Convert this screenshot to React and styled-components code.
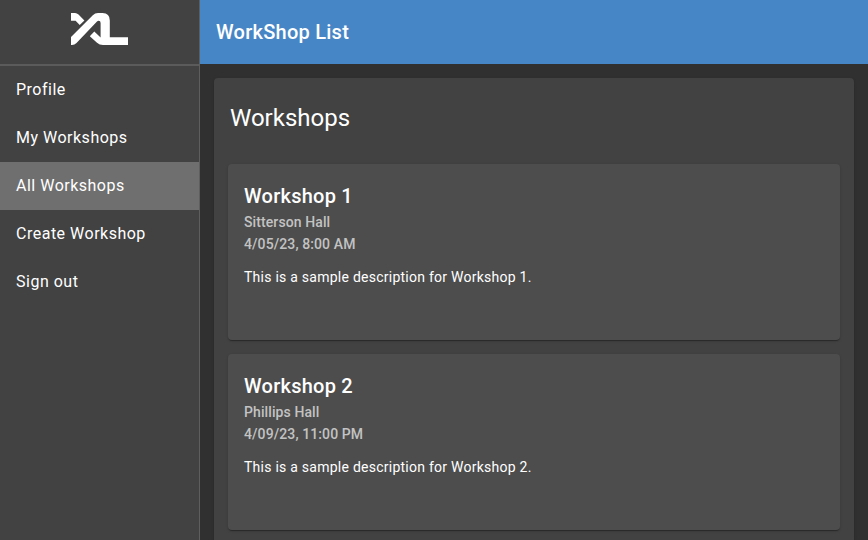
import React from "react";
import styled, { createGlobalStyle } from "styled-components";

const GlobalStyle = createGlobalStyle`
  * { box-sizing: border-box; }
  html, body { margin: 0; height: 100%; background: #303030; overflow: hidden; }
  body { font-family: Roboto, "Liberation Sans", sans-serif; color: #fff; }
  h1, h2, h3, p { margin: 0; }
`;

const Layout = styled.div`
  display: grid;
  grid-template-columns: 200px 1fr;
  height: 100vh;
  overflow: hidden;
`;

const Sidebar = styled.aside`
  background: #424242;
  border-right: 1px solid #5e5e5e;
`;

const Brand = styled.div`
  display: flex;
  justify-content: center;
  height: 66px;
  padding-top: 12px;
  border-bottom: 2px solid #5b5b5b;
`;

const Logo = styled.svg`
  width: 58px;
  height: 34px;
  fill: #fff;
`;

const NavItem = styled.a`
  display: flex;
  align-items: center;
  height: 48px;
  padding: 0 16px;
  font-size: 16px;
  line-height: 24px;
  letter-spacing: 0.5px;
  background: ${({ $active }) => ($active ? "#6f6f6f" : "transparent")};
`;

const Main = styled.main`
  display: flex;
  flex-direction: column;
  min-width: 0;
`;

const Toolbar = styled.header`
  display: flex;
  align-items: center;
  flex: none;
  height: 64px;
  padding: 0 16px;
  background: #4786c6;
`;

const ToolbarTitle = styled.h1`
  font-size: 20px;
  font-weight: 500;
  line-height: 32px;
  letter-spacing: 0.25px;
`;

const Card = styled.section`
  border-radius: 4px;
  box-shadow: 0 2px 1px -1px rgba(0, 0, 0, 0.2),
    0 1px 1px 0 rgba(0, 0, 0, 0.14), 0 1px 3px 0 rgba(0, 0, 0, 0.12);
`;

const ListCard = styled(Card)`
  flex: none;
  margin: 14px;
  padding: 24px 14px 14px;
  background: #424242;
`;

const ListTitle = styled.h2`
  padding-left: 2px;
  margin-bottom: 30px;
  font-size: 24px;
  font-weight: 400;
  line-height: 32px;
`;

const WorkshopCard = styled(Card)`
  height: 176px;
  margin-bottom: 14px;
  padding: 16px;
  background: #4d4d4d;
`;

const WorkshopName = styled.h3`
  margin-bottom: -1px;
  font-size: 20px;
  font-weight: 500;
  line-height: 32px;
  letter-spacing: 0.25px;
`;

const Detail = styled.p`
  font-size: 14px;
  font-weight: 500;
  line-height: 22px;
  letter-spacing: 0.1px;
  color: #c3c3c3;
`;

const Description = styled.p`
  margin-top: 12px;
  font-size: 14px;
  line-height: 20px;
  letter-spacing: 0.25px;
`;

const navItems = ["Profile", "My Workshops", "All Workshops", "Create Workshop", "Sign out"];

const workshops = [
  { name: "Workshop 1", place: "Sitterson Hall", time: "4/05/23, 8:00 AM" },
  { name: "Workshop 2", place: "Phillips Hall", time: "4/09/23, 11:00 PM" },
];

export default function App() {
  return (
    <>
      <GlobalStyle />
      <Layout>
        <Sidebar>
          <Brand>
            <Logo viewBox="0 0 58 34" aria-label="XL">
              <path d="M0 1H4Q6 1 7.5 2.5L13.4 8.4L8.7 13L4.6 8.8H0Z" />
              <path d="M0 33V25L21.8 3.2Q24 1 27 1H31.5Q38.8 1 38.8 8.5V25.2H57V33H32Q28.5 33 26 30.8L18.8 24.2L23.3 19.5L29.6 25.6V11Q29.6 8.8 27.6 8.8Q26.8 8.8 26 9.6L5.5 31Q3.5 33 1 33Z" />
            </Logo>
          </Brand>
          <nav>
            {navItems.map((item) => (
              <NavItem key={item} $active={item === "All Workshops"}>{item}</NavItem>
            ))}
          </nav>
        </Sidebar>
        <Main>
          <Toolbar><ToolbarTitle>WorkShop List</ToolbarTitle></Toolbar>
          <ListCard>
            <ListTitle>Workshops</ListTitle>
            {workshops.map(({ name, place, time }) => (
              <WorkshopCard as="article" key={name}>
                <WorkshopName>{name}</WorkshopName>
                <Detail>{place}</Detail>
                <Detail>{time}</Detail>
                <Description>This is a sample description for {name}.</Description>
              </WorkshopCard>
            ))}
          </ListCard>
        </Main>
      </Layout>
    </>
  );
}
